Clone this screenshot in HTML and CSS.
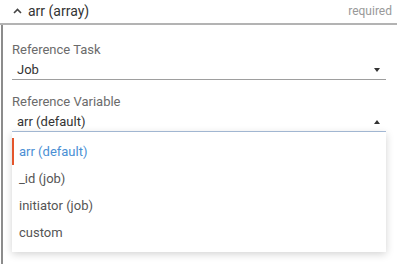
FILE: index.html
```html
<!DOCTYPE html>
<html lang="en">
<head>
	<meta charset="UTF-8">
	<title>Reference</title>
	<link rel="stylesheet" href="styles.css">
</head>
<body>
	<div class="param">
		<div class="param-head">
			<span class="caret">
				<svg width="9" height="6" viewBox="0 0 9 6"><polyline points="1,5 4.5,1.5 8,5" fill="none" stroke="#444" stroke-width="1.6"/></svg>
			</span>
			<span class="param-name">arr (array)</span>
			<span class="param-req">required</span>
		</div>
		<div class="param-body">
			<div class="field">
				<div class="field-label">Reference Task</div>
				<div class="select">
					<span class="select-value">Job</span>
					<span class="arrow down"></span>
				</div>
			</div>
			<div class="field">
				<div class="field-label">Reference Variable</div>
				<div class="select open">
					<span class="select-value">arr (default)</span>
					<span class="arrow up"></span>
					<ul class="menu">
						<li class="active">arr (default)</li>
						<li>_id (job)</li>
						<li>initiator (job)</li>
						<li>custom</li>
					</ul>
				</div>
			</div>
		</div>
	</div>
</body>
</html>
```

FILE: styles.css
```css
* {
	margin: 0;
	padding: 0;
	box-sizing: border-box;
}
body {
	font-family: Roboto, "Liberation Sans", sans-serif;
	background: #fff;
	color: #333;
	width: 397px;
	height: 264px;
	overflow: hidden;
}
.param-head {
	display: flex;
	align-items: center;
	height: 25px;
	padding: 0 5px 2px 13px;
	border-bottom: 2px solid #b3b3b3;
}
.caret {
	display: flex;
	width: 15px;
}
.param-name {
	font-size: 14px;
	color: #333;
}
.param-req {
	margin-left: auto;
	font-size: 12px;
	color: #999;
}
.param-body {
	margin-left: 1px;
	border-left: 2px solid #8c8c8c;
	padding: 17px 11px 0 9px;
	height: 240px;
}
.field {
	margin-bottom: 14px;
}
.field-label {
	font-size: 13px;
	line-height: 16px;
	color: #6b6b6b;
}
.select {
	position: relative;
	display: flex;
	align-items: center;
	padding: 4px 6px 1px 5px;
	border-bottom: 1px solid #9e9e9e;
}
.select.open {
	border-bottom-color: #a9bfdc;
}
.select-value {
	font-size: 13px;
	line-height: 16px;
	color: #333;
}
.arrow {
	margin-left: auto;
	width: 0;
	height: 0;
	border-left: 3.5px solid transparent;
	border-right: 3.5px solid transparent;
}
.arrow.down {
	border-top: 4px solid #333;
}
.arrow.up {
	border-bottom: 4px solid #333;
}
.menu {
	position: absolute;
	top: 100%;
	left: 0;
	right: 0;
	margin-top: 1px;
	list-style: none;
	background: #fff;
	padding: 6px 0;
	box-shadow: 0 2px 8px rgba(0, 0, 0, 0.18);
}
.menu li {
	height: 27px;
	line-height: 27px;
	padding-left: 5px;
	font-size: 13px;
	color: #555;
	border-left: 2px solid transparent;
}
.menu li.active {
	color: #4a8fd4;
	border-left-color: #e4552b;
}
```
